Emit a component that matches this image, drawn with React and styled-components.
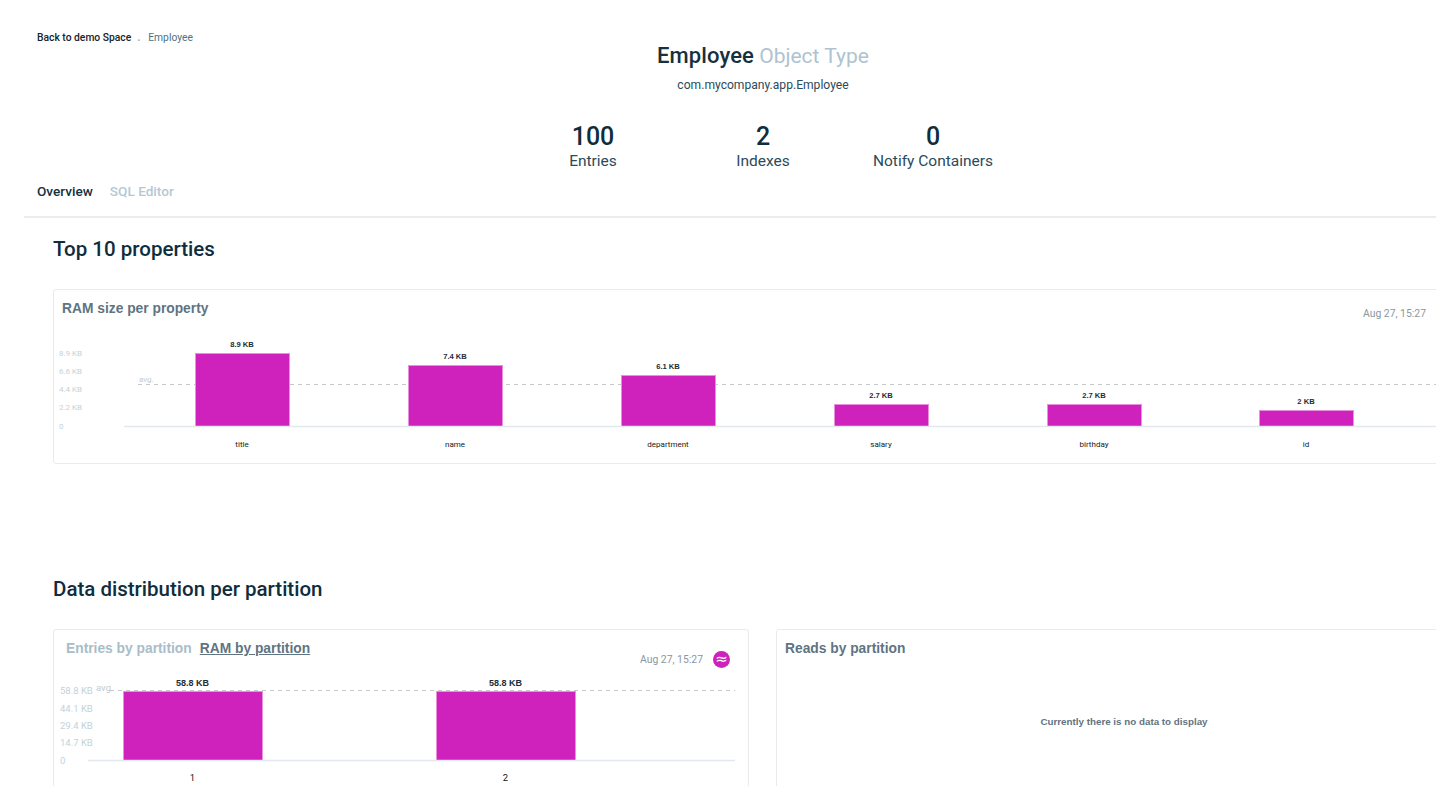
import React from "react";
import styled, { createGlobalStyle } from "styled-components";

const propertyChart = {
  width: 1417,
  height: 132,
  fontSize: 8,
  valueSize: 7.6,
  baseline: 96.5,
  axisStart: 70,
  avgY: 54.5,
  avgStart: 84,
  avgLabel: { x: 85, y: 52, size: 8 },
  axisX: 5,
  ticks: [
    { label: "8.9 KB", y: 24 },
    { label: "6.6 KB", y: 42 },
    { label: "4.4 KB", y: 60 },
    { label: "2.2 KB", y: 78 },
    { label: "0", y: 97 },
  ],
  barWidth: 94,
  valueOffset: 6,
  categoryY: 115,
  bars: [
    { name: "title", value: "8.9 KB", x: 141, top: 23 },
    { name: "name", value: "7.4 KB", x: 354, top: 35 },
    { name: "department", value: "6.1 KB", x: 567, top: 45 },
    { name: "salary", value: "2.7 KB", x: 780, top: 74 },
    { name: "birthday", value: "2.7 KB", x: 993, top: 74 },
    { name: "id", value: "2 KB", x: 1205, top: 80 },
  ],
};

const partitionChart = {
  width: 694,
  height: 120,
  fontSize: 9.5,
  valueSize: 9,
  baseline: 90.5,
  axisStart: 34,
  axisEnd: 681,
  avgY: 20.5,
  avgStart: 56,
  avgEnd: 681,
  avgLabel: { x: 42, y: 21, size: 9.5 },
  axisX: 6,
  ticks: [
    { label: "58.8 KB", y: 21 },
    { label: "44.1 KB", y: 39 },
    { label: "29.4 KB", y: 56 },
    { label: "14.7 KB", y: 73 },
    { label: "0", y: 91 },
  ],
  barWidth: 139,
  valueOffset: 5,
  categoryY: 108,
  bars: [
    { name: "1", value: "58.8 KB", x: 69, top: 21 },
    { name: "2", value: "58.8 KB", x: 382, top: 21 },
  ],
};

function BarChart({ chart }) {
  const axisEnd = chart.axisEnd || chart.width;
  const avgEnd = chart.avgEnd || chart.width;
  return (
    <ChartSvg width={chart.width} height={chart.height}>
      <line x1={chart.avgStart} x2={avgEnd} y1={chart.avgY} y2={chart.avgY} stroke="#c4c9cc" strokeDasharray="4 4" />
      <AvgText x={chart.avgLabel.x} y={chart.avgLabel.y} $size={chart.avgLabel.size}>
        avg.
      </AvgText>
      {chart.ticks.map((tick) => (
        <AxisText key={tick.label} x={chart.axisX} y={tick.y} $size={chart.fontSize}>
          {tick.label}
        </AxisText>
      ))}
      {chart.bars.map((bar) => (
        <g key={bar.name}>
          <rect
            x={bar.x + 0.5}
            y={bar.top + 0.5}
            width={chart.barWidth}
            height={chart.baseline - bar.top - 0.5}
            fill="#cf21bb"
            stroke="#e88fdd"
          />
          <ValueText x={bar.x + chart.barWidth / 2} y={bar.top - chart.valueOffset} $size={chart.valueSize}>
            {bar.value}
          </ValueText>
          <CategoryText x={bar.x + chart.barWidth / 2} y={chart.categoryY} $size={chart.fontSize}>
            {bar.name}
          </CategoryText>
        </g>
      ))}
      <line x1={chart.axisStart} x2={axisEnd} y1={chart.baseline} y2={chart.baseline} stroke="#e2e8ee" strokeWidth="1.5" />
    </ChartSvg>
  );
}

export default function App() {
  return (
    <Page>
      <GlobalStyle />
      <Breadcrumb>
        <BackLink>Back to demo Space</BackLink>
        <Dot>.</Dot>
        <Crumb>Employee</Crumb>
      </Breadcrumb>

      <Hero>
        <Title>
          <strong>Employee</strong> <span>Object Type</span>
        </Title>
        <ClassName>com.mycompany.app.Employee</ClassName>
        <Stats>
          <Stat>
            <StatValue>100</StatValue>
            <StatLabel>Entries</StatLabel>
          </Stat>
          <Stat>
            <StatValue>2</StatValue>
            <StatLabel>Indexes</StatLabel>
          </Stat>
          <Stat>
            <StatValue>0</StatValue>
            <StatLabel>Notify Containers</StatLabel>
          </Stat>
        </Stats>
      </Hero>

      <TabBar>
        <Tab $active>Overview</Tab>
        <Tab>SQL Editor</Tab>
      </TabBar>

      <Content>
        <SectionTitle>Top 10 properties</SectionTitle>
        <Card>
          <CardHeader>
            <CardTitle>RAM size per property</CardTitle>
            <CardMeta $right={45} $top={17}>
              <Timestamp>Aug 27, 15:27</Timestamp>
            </CardMeta>
          </CardHeader>
          <BarChart chart={propertyChart} />
        </Card>

        <SectionTitle $gap={111}>Data distribution per partition</SectionTitle>
        <CardGrid>
          <Card $tall>
            <CardHeader>
              <CardTabs>
                <CardTab>Entries by partition</CardTab>
                <CardTab $active>RAM by partition</CardTab>
              </CardTabs>
              <CardMeta $right={18} $top={19}>
                <Timestamp>Aug 27, 15:27</Timestamp>
                <Badge>≈</Badge>
              </CardMeta>
            </CardHeader>
            <BarChart chart={partitionChart} />
          </Card>
          <Card $tall>
            <CardHeader>
              <CardTitle>Reads by partition</CardTitle>
            </CardHeader>
            <EmptyState>Currently there is no data to display</EmptyState>
          </Card>
        </CardGrid>
      </Content>
    </Page>
  );
}

const GlobalStyle = createGlobalStyle`
  html, body {
    margin: 0;
    padding: 0;
    background: #fff;
  }
`;

const Page = styled.div`
  width: 1436px;
  height: 786px;
  overflow: hidden;
  background: #fff;
  font-family: Roboto, sans-serif;
  color: #0f2d3d;
`;

const Breadcrumb = styled.div`
  display: flex;
  align-items: center;
  height: 12px;
  padding: 32px 0 0 37px;
  font-size: 10.3px;
  line-height: 12px;
`;

const BackLink = styled.span`
  color: #14232c;
  font-weight: 500;
`;

const Dot = styled.span`
  margin: 0 8px 0 6px;
  color: #7fb2cc;
  font-weight: 700;
`;

const Crumb = styled.span`
  color: #4f7182;
`;

const Hero = styled.div`
  display: flex;
  flex-direction: column;
  align-items: center;
  margin-top: -1px;
  padding-left: 90px;
`;

const Title = styled.h1`
  margin: 0;
  font-size: 21px;
  line-height: 26px;
  font-weight: 400;
  color: #aec3cf;

  strong {
    font-size: 22px;
    letter-spacing: 0.1px;
    font-weight: 500;
    color: #16303f;
  }
`;

const ClassName = styled.div`
  margin-top: 8px;
  font-size: 12.1px;
  line-height: 16px;
  color: #2c4a5a;
`;

const Stats = styled.div`
  display: grid;
  grid-template-columns: repeat(3, 170px);
  margin-top: 30px;
`;

const Stat = styled.div`
  display: flex;
  flex-direction: column;
  align-items: center;
  white-space: nowrap;
`;

const StatValue = styled.div`
  font-size: 25px;
  line-height: 28px;
  font-weight: 500;
  color: #0f2d3d;
`;

const StatLabel = styled.div`
  margin-top: 1px;
  font-size: 15.5px;
  line-height: 18px;
  color: #2c4a5a;
`;

const TabBar = styled.div`
  display: flex;
  gap: 17px;
  margin: 12px 0 0 24px;
  padding: 0 0 16px 13px;
  border-bottom: 2px solid #ececec;
`;

const Tab = styled.div`
  font-size: 13.6px;
  line-height: 18px;
  font-weight: 500;
  color: ${(p) => (p.$active ? "#16303f" : "#b4c8d3")};
`;

const Content = styled.div`
  width: 1419px;
  margin-left: 53px;
`;

const SectionTitle = styled.h2`
  margin: ${(p) => p.$gap || 17}px 0 26px;
  font-size: 20.5px;
  line-height: 28px;
  font-weight: 500;
  color: #0f2d3d;
`;

const Card = styled.div`
  box-sizing: border-box;
  height: ${(p) => (p.$tall ? "220px" : "175px")};
  border: 1px solid #e8ecef;
  border-radius: 3px;
  background: #fff;
`;

const CardGrid = styled.div`
  display: grid;
  grid-template-columns: 696px 696px;
  gap: 27px;
`;

const CardHeader = styled.div`
  display: flex;
  justify-content: space-between;
  align-items: flex-start;
  height: 40px;
`;

const CardTitle = styled.div`
  padding: 11px 0 0 8px;
  font-family: "Liberation Sans", Arial, sans-serif;
  font-size: 13.8px;
  line-height: 16px;
  font-weight: 700;
  color: #5f7482;
`;

const CardTabs = styled.div`
  display: flex;
  gap: 8px;
  padding: 11px 0 0 12px;
`;

const CardTab = styled.div`
  font-family: "Liberation Sans", Arial, sans-serif;
  font-size: 13.8px;
  line-height: 16px;
  font-weight: 700;
  color: ${(p) => (p.$active ? "#5f7482" : "#a9bdc8")};
  text-decoration: ${(p) => (p.$active ? "underline" : "none")};
`;

const CardMeta = styled.div`
  display: flex;
  align-items: center;
  gap: 10px;
  padding: ${(p) => p.$top + 2}px ${(p) => p.$right}px 0 0;
  margin-top: ${(p) => (p.$right === 45 ? "-2px" : "0")};
`;

const Timestamp = styled.span`
  font-size: 10.4px;
  line-height: 14px;
  color: #8a979f;
`;

const Badge = styled.span`
  display: flex;
  align-items: center;
  justify-content: center;
  width: 17px;
  height: 17px;
  border-radius: 50%;
  background: #cf21bb;
  color: #fff;
  font-family: "DejaVu Sans", sans-serif;
  font-size: 15px;
  font-weight: 400;
  line-height: 17px;
`;

const EmptyState = styled.div`
  padding-top: 44px;
  text-align: center;
  font-family: "Liberation Sans", Arial, sans-serif;
  font-size: 9.8px;
  line-height: 16px;
  font-weight: 700;
  color: #5f7482;
`;

const ChartSvg = styled.svg`
  display: block;
`;

const AxisText = styled.text`
  font-family: Roboto, sans-serif;
  font-size: ${(p) => p.$size}px;
  fill: #c3d2da;
  dominant-baseline: middle;
`;

const AvgText = styled.text`
  font-family: Roboto, sans-serif;
  font-size: ${(p) => p.$size}px;
  fill: #c4cacd;
`;

const ValueText = styled.text`
  font-family: "Liberation Sans", Arial, sans-serif;
  font-size: ${(p) => p.$size}px;
  font-weight: 700;
  fill: #1d2d36;
  text-anchor: middle;
`;

const CategoryText = styled.text`
  font-family: Roboto, sans-serif;
  font-size: ${(p) => p.$size}px;
  fill: #14181b;
  text-anchor: middle;
  dominant-baseline: middle;
`;
